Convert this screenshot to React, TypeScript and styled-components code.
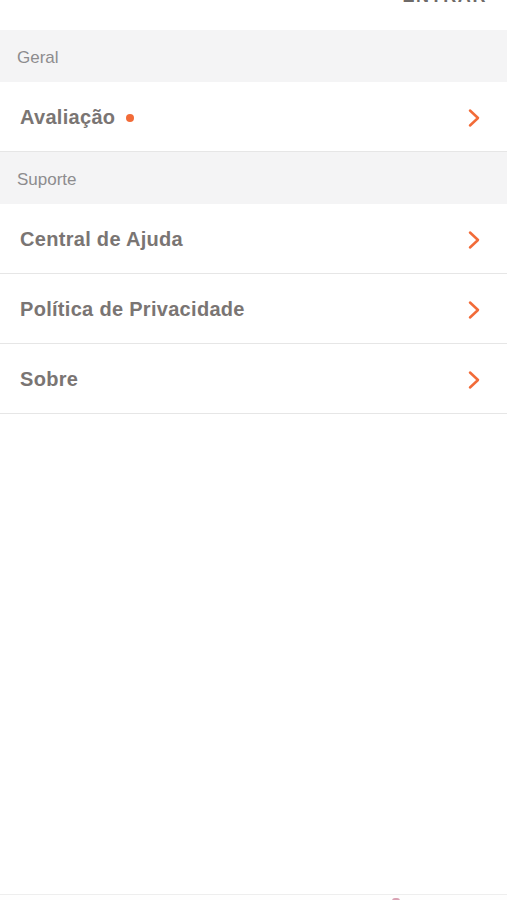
import React from "react";
import styled, { createGlobalStyle } from "styled-components";

const GlobalStyle = createGlobalStyle`
  *, *::before, *::after {
    box-sizing: border-box;
  }
  html, body {
    margin: 0;
    padding: 0;
    background: #ffffff;
    font-family: "Liberation Sans", Arial, sans-serif;
  }
`;

const Screen = styled.div`
  display: flex;
  flex-direction: column;
  height: calc(100vh + 44px);
  overflow: hidden;
  background: #ffffff;
`;

const Header = styled.header`
  display: flex;
  justify-content: flex-end;
  align-items: flex-start;
  height: 30px;
  padding-right: 20px;
  overflow: hidden;
`;

const HeaderAction = styled.span`
  margin-top: -14px;
  font-size: 18px;
  line-height: 20px;
  font-weight: 700;
  letter-spacing: 1.6px;
  color: #6e6a68;
`;

const SectionTitle = styled.div`
  display: flex;
  align-items: center;
  height: 52px;
  padding: 3px 0 0 17px;
  background: #f4f4f5;
  font-size: 17px;
  color: #8d8c8e;
`;

const Row = styled.div`
  display: flex;
  align-items: center;
  height: 70px;
  padding: 2px 26px 0 20px;
  border-bottom: 1px solid #e6e6e6;
  background: #ffffff;
`;

const RowLabel = styled.span`
  flex: 1;
  display: flex;
  align-items: center;
  gap: 11px;
  font-size: 20px;
  font-weight: 700;
  letter-spacing: 0.3px;
  color: #7a7573;
`;

const Dot = styled.span`
  width: 8px;
  height: 8px;
  border-radius: 50%;
  background: #f26b38;
`;

const Spacer = styled.div`
  flex: 1;
`;

const TabBar = styled.nav`
  display: flex;
  justify-content: flex-end;
  flex-shrink: 0;
  height: 50px;
  padding: 3px 107px 0 0;
  border-top: 1px solid #eeeeee;
  background: #fefefe;
`;

const TabIcon = styled.span`
  width: 8px;
  height: 8px;
  border-radius: 3px;
  background: #d9a3b4;
`;

const Chevron = () => (
  <svg width="14" height="20" viewBox="0 0 14 20" fill="none">
    <path
      d="M3 2.5 L11 10 L3 17.5"
      stroke="#f26b38"
      strokeWidth="2.5"
      strokeLinecap="round"
      strokeLinejoin="round"
    />
  </svg>
);

interface SettingsRowProps {
  label: string;
  badge?: boolean;
}

const SettingsRow = ({ label, badge }: SettingsRowProps) => (
  <Row>
    <RowLabel>
      {label}
      {badge && <Dot />}
    </RowLabel>
    <Chevron />
  </Row>
);

const App = () => {
  return (
    <Screen>
      <GlobalStyle />
      <Header>
        <HeaderAction>ENTRAR</HeaderAction>
      </Header>
      <SectionTitle>Geral</SectionTitle>
      <SettingsRow label="Avaliação" badge />
      <SectionTitle>Suporte</SectionTitle>
      <SettingsRow label="Central de Ajuda" />
      <SettingsRow label="Política de Privacidade" />
      <SettingsRow label="Sobre" />
      <Spacer />
      <TabBar>
        <TabIcon />
      </TabBar>
    </Screen>
  );
};

export default App;
